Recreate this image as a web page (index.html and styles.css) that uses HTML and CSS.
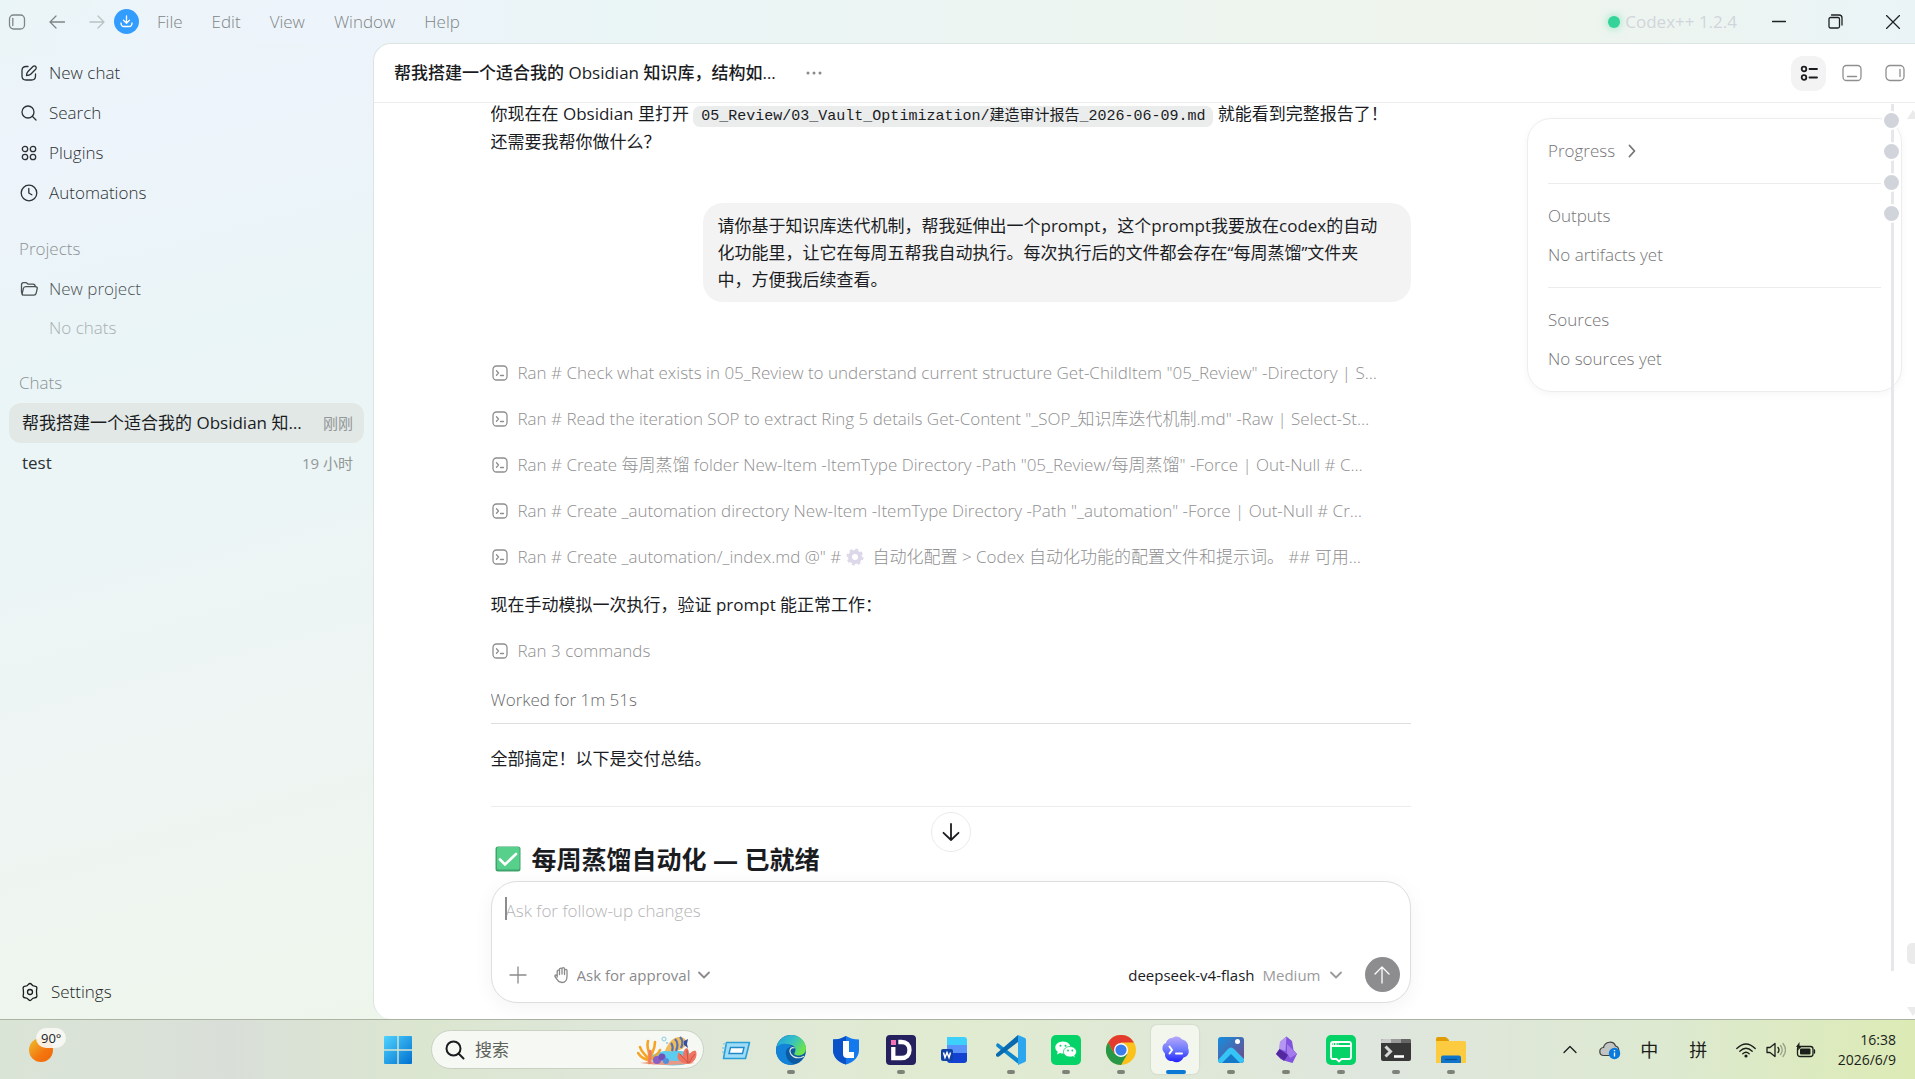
FILE: index.html
```html
<!DOCTYPE html>
<html lang="zh-CN">
<head>
  <meta charset="UTF-8">
  <meta name="viewport" content="width=device-width, initial-scale=1">
  <title>Codex++</title>
  <link rel="stylesheet" href="styles.css">
</head>
<body>

  <!-- shared icons -->
  <svg class="defs" width="0" height="0" aria-hidden="true">
    <symbol id="i-term" viewBox="0 0 18 18"><rect x="2" y="2" width="14" height="14" rx="3.5"/><path d="M5.5 6.8 7.5 9l-2 2.2M9.5 11.5h3"/></symbol>
    <symbol id="i-down" viewBox="0 0 14 14"><path d="M2 4.5 7 9.5l5-5"/></symbol>
  </svg>

  <header class="titlebar">
    <div class="nav-icons">
      <button class="icon-btn" aria-label="Toggle sidebar"><svg class="icon" width="18" height="18" viewBox="0 0 18 18"><rect x="1.5" y="2" width="15" height="14" rx="4"/><path d="M4.8 5.5v7"/></svg></button>
      <button class="icon-btn" aria-label="Back"><svg class="icon" width="18" height="18" viewBox="0 0 18 18"><path d="M8 3 2 9l6 6M2 9h14.500"/></svg></button>
      <button class="icon-btn faded" aria-label="Forward"><svg class="icon" width="18" height="18" viewBox="0 0 18 18"><path d="m10 3 6 6-6 6M16 9H2"/></svg></button>
      <button class="update" aria-label="Update"><svg class="icon" width="15" height="15" viewBox="0 0 15 15"><path d="M7.500 2v7M4.500 6.300l3 3 3-3M2 9c0 3 1 3.500 3 3.500h5c2 0 3-.5 3-3.500"/></svg></button>
    </div>
    <nav class="menu">
      <button>File</button>
      <button>Edit</button>
      <button>View</button>
      <button>Window</button>
      <button>Help</button>
    </nav>
    <div class="version"><span class="dot"></span>Codex++ 1.2.4</div>
    <div class="window-btns">
      <button aria-label="Minimize"><svg class="icon" width="14" height="14" viewBox="0 0 14 14"><path d="M0.500 6.500h13"/></svg></button>
      <button aria-label="Restore"><svg class="icon" width="15" height="15" viewBox="0 0 15 15"><rect x="1" y="3.500" width="10.500" height="10.500" rx="1.500"/><path d="M3.500 1h7.500c2 0 3 1 3 3v7"/></svg></button>
      <button aria-label="Close"><svg class="icon" width="14" height="14" viewBox="0 0 14 14"><path d="m.5.5 13 13m0-13-13 13"/></svg></button>
    </div>
  </header>

  <div class="app">
    <aside class="sidebar">
      <a class="item" href="#"><svg class="icon" width="18" height="18" viewBox="0 0 18 18"><path d="M8 2.500H6C3.500 2.500 2 4 2 6.500v5.500C2 14.500 3.500 16 6 16h5.500c2.500 0 4-1.500 4-4v-2"/><path d="M6.500 11.500c0-2 .5-3 1.500-4l5-5c.8-.8 2-.8 2.700 0s.7 1.900 0 2.700l-5 5c-1 1-2.200 1.300-4.200 1.300z"/></svg>New chat</a>
      <a class="item" href="#"><svg class="icon" width="18" height="18" viewBox="0 0 18 18"><circle cx="8" cy="8" r="6"/><path d="m12.500 12.500 3.500 3.500"/></svg>Search</a>
      <a class="item" href="#"><svg class="icon" width="18" height="18" viewBox="0 0 18 18"><circle cx="5" cy="5" r="2.700"/><circle cx="13" cy="5" r="2.700"/><circle cx="5" cy="13" r="2.700"/><circle cx="13" cy="13" r="2.700"/></svg>Plugins</a>
      <a class="item" href="#"><svg class="icon" width="18" height="18" viewBox="0 0 18 18"><circle cx="9" cy="9" r="7.800"/><path d="M8.800 4.500V9l3 1.800"/></svg>Automations</a>

      <h2>Projects</h2>
      <a class="item project" href="#"><svg class="icon" width="18" height="18" viewBox="0 0 18 18"><path d="M2.500 15 1.500 12V5c0-1.500.7-2.300 2-2.300h2.300c1.500 0 1.500 1.500 3 1.500H13c1.500 0 2.200.8 2.200 2.300"/><path d="M5.800 6.700h9.700c1.300 0 2 .8 1.700 2l-1 4.500c-.3 1.400-1 2-2.400 2H4c-1.300 0-2-.8-1.700-2l1-4.500c.3-1.400 1-2 2.500-2z"/></svg>New project</a>
      <p class="item empty">No chats</p>

      <h2>Chats</h2>
      <a class="chat active" href="#"><span>帮我搭建一个适合我的 Obsidian 知…</span><time>刚刚</time></a>
      <a class="chat" href="#"><span>test</span><time>19 小时</time></a>

      <a class="item settings" href="#"><svg class="icon" width="20" height="20" viewBox="0 0 20 20"><path d="M10 1.500c1.300 0 1.900 1.500 3 2.200s2.800.3 3.600 1.300-.1 2.300-.1 3.500.1 1.800.1 3 .8 2.500 0 3.500-2.400.6-3.600 1.300-1.700 2.200-3 2.200-1.900-1.500-3-2.200-2.800-.3-3.600-1.300.1-2.300.1-3.500-.1-1.800-.1-3-.8-2.500 0-3.500 2.400-.6 3.600-1.300 1.700-2.200 3-2.200z"/><circle cx="10" cy="10" r="2.500"/></svg>Settings</a>
    </aside>

    <main class="panel">
      <header class="panel-head">
        <h1>帮我搭建一个适合我的 Obsidian 知识库，结构如…</h1>
        <button class="more" aria-label="More"><svg width="16" height="4" viewBox="0 0 16 4"><circle cx="2" cy="2" r="1.500"/><circle cx="8" cy="2" r="1.500"/><circle cx="14" cy="2" r="1.500"/></svg></button>
        <div class="views">
          <button class="on" aria-label="Summary"><svg class="icon" width="18" height="18" viewBox="0 0 18 18"><circle cx="4" cy="5" r="2.300"/><circle cx="4" cy="13.500" r="2.300"/><path d="M9.500 5H17M9.500 13.500H17"/></svg></button>
          <button aria-label="Bottom panel"><svg class="icon" width="20" height="18" viewBox="0 0 20 18"><rect x="1" y="1.500" width="18" height="15" rx="3.500"/><path d="M5.500 12.500h9"/></svg></button>
          <button aria-label="Side panel"><svg class="icon" width="20" height="18" viewBox="0 0 20 18"><rect x="1" y="1.500" width="18" height="15" rx="4"/><path d="M15 5.500v7"/></svg></button>
        </div>
      </header>

      <div class="workspace">
        <section class="conversation">
          <div class="thread">
            <p class="text">你现在在 Obsidian 里打开 <code>05_Review/03_Vault_Optimization/建造审计报告_2026-06-09.md</code> 就能看到完整报告了！<br>还需要我帮你做什么？</p>

            <p class="bubble">请你基于知识库迭代机制，帮我延伸出一个prompt，这个prompt我要放在codex的自动化功能里，让它在每周五帮我自动执行。每次执行后的文件都会存在“每周蒸馏”文件夹中，方便我后续查看。</p>

            <div class="runs">
              <p class="run"><svg class="icon" width="18" height="18"><use href="#i-term"/></svg><span>Ran # Check what exists in 05_Review to understand current structure Get-ChildItem "05_Review" -Directory | S…</span></p>
              <p class="run"><svg class="icon" width="18" height="18"><use href="#i-term"/></svg><span>Ran # Read the iteration SOP to extract Ring 5 details Get-Content "_SOP_知识库迭代机制.md" -Raw | Select-St…</span></p>
              <p class="run"><svg class="icon" width="18" height="18"><use href="#i-term"/></svg><span>Ran # Create 每周蒸馏 folder New-Item -ItemType Directory -Path "05_Review/每周蒸馏" -Force | Out-Null # C…</span></p>
              <p class="run"><svg class="icon" width="18" height="18"><use href="#i-term"/></svg><span>Ran # Create _automation directory New-Item -ItemType Directory -Path "_automation" -Force | Out-Null # Cr…</span></p>
              <p class="run"><svg class="icon" width="18" height="18"><use href="#i-term"/></svg><span>Ran # Create _automation/_index.md @" # <svg class="gear" width="18" height="18" viewBox="0 0 18 18"><circle cx="9" cy="9" r="5"/><circle class="teeth" cx="9" cy="9" r="7.500"/></svg>&nbsp; 自动化配置 &gt; Codex 自动化功能的配置文件和提示词。 ## 可用…</span></p>
            </div>

            <p class="text step">现在手动模拟一次执行，验证 prompt 能正常工作：</p>
            <p class="run"><svg class="icon" width="18" height="18"><use href="#i-term"/></svg><span>Ran 3 commands</span></p>
            <p class="worked">Worked for 1m 51s</p>
            <p class="text done">全部搞定！以下是交付总结。</p>
            <h2 class="summary"><svg width="26" height="26" viewBox="0 0 26 26"><rect x="0.500" y="0.500" width="25" height="25" rx="2.500" fill="#3fa36c"/><rect x="2" y="1" width="22.500" height="22.500" rx="1.500" fill="#56d08a"/><path d="m5 13.500 5 5L21 8" fill="none" stroke="#fff" stroke-width="2.600" stroke-linecap="round"/></svg>每周蒸馏自动化 — 已就绪</h2>
          </div>

          <form class="composer">
            <button type="button" class="jump" aria-label="Scroll to bottom"><svg class="icon" width="20" height="20" viewBox="0 0 20 20"><path d="M10 2v16M2.500 10.800 10 18l7.500-7.200"/></svg></button>
            <div class="prompt"><textarea rows="1" aria-label="Message" placeholder="Ask for follow-up changes"></textarea></div>
            <div class="tools">
              <button type="button" class="icon-btn" aria-label="Add"><svg class="icon" width="18" height="18" viewBox="0 0 18 18"><path d="M9 1v16M1 9h16"/></svg></button>
              <label class="approval"><svg class="icon" width="18" height="18" viewBox="0 0 18 18"><path d="M4.200 11V5.200c0-1.500 2.300-1.500 2.300 0V8.500M6.500 8V3.300c0-1.600 2.500-1.600 2.500 0V8M9 8V2.800c0-1.600 2.500-1.600 2.500 0V8.500M11.500 8V4.500c0-1.500 2.500-1.500 2.500 0V10c0 4-1.800 6.500-5 6.500-2.500 0-4-1.200-5-3.200L2 10.500c-.6-1.400 1-2.200 2.200-.6"/></svg>
                <select aria-label="Approval mode"><option>Ask for approval</option></select>
                <svg class="icon chev" width="14" height="14"><use href="#i-down"/></svg></label>
              <button type="button" class="model">deepseek-v4-flash <span>Medium</span><svg class="icon chev" width="14" height="14"><use href="#i-down"/></svg></button>
              <button class="send" aria-label="Send"><svg class="icon" width="20" height="20" viewBox="0 0 20 20"><path d="M10 18V2M3 9l7-7 7 7"/></svg></button>
            </div>
          </form>
        </section>

        <aside class="side">
          <div class="card">
            <section><h3>Progress <svg class="icon" width="14" height="14" viewBox="0 0 14 14"><path d="m4.500 1.500 5 5.500-5 5.500"/></svg></h3></section>
            <section><h3>Outputs</h3><p>No artifacts yet</p></section>
            <section><h3>Sources</h3><p>No sources yet</p></section>
          </div>
        </aside>

        <div class="rail"><i></i><i></i><i></i><i></i></div>
        <div class="scroll"><b class="up"></b><b class="thumb"></b><b class="dn"></b></div>
      </div>
    </main>
  </div>

  <footer class="taskbar">
    <div class="weather"><span class="sun"></span><span class="temp">90°</span></div>

    <div class="apps">
      <button class="task" aria-label="Start"><svg width="30" height="30" viewBox="0 0 30 30"><defs><linearGradient id="win" x1="0" y1="0" x2="1" y2="1"><stop offset="0" stop-color="#4fd3ff"/><stop offset="1" stop-color="#0070cf"/></linearGradient></defs><path fill="url(#win)" d="M1 2q0-1 1-1h12.300v13.300H1zM15.700 1H28q1 0 1 1v12.300H15.700zM1 15.700h13.300V29H2q-1 0-1-1zM15.700 15.700H29V28q0 1-1 1H15.700z"/></svg></button>

      <label class="search">
        <svg class="icon" width="20" height="20" viewBox="0 0 20 20"><circle cx="8.500" cy="8.500" r="7"/><path d="m13.500 13.500 5 5"/></svg>
        <input type="text" placeholder="搜索" aria-label="搜索">
        <svg width="62" height="32" viewBox="0 0 62 32">
          <ellipse cx="36" cy="24" rx="22" ry="7.500" fill="#5ccdf0"/>
          <path d="M3 29q29-5 55 0-28 4-55 0z" fill="#e79a86"/>
          <path d="M12 29c0-8-7-8-9-16M12 24c1-8-3-9-1-17M13 27c1-9 5-10 5-19M13 26c5-3 8-6 10-10M11 26c-5-1-8-4-10-7" fill="none" stroke="#f5a423" stroke-width="2.600" stroke-linecap="round"/>
          <path d="M13 30c-1-6 1-9 0-14" stroke="#ee7a6a" stroke-width="3" fill="none"/>
          <circle cx="20" cy="26" r="4" fill="#8b5fc4"/><circle cx="25" cy="23" r="3.500" fill="#7250b8"/><circle cx="29" cy="27" r="3" fill="#4f8fe0"/>
          <path d="M51 30c-9-1-13-6-9-12 1 2 2 3 4 4 0-4 1-7 4-8 2 2 2 4 2 7 2-3 4-5 7-4 2 6-2 12-8 13z" fill="#ef7560"/>
          <path d="M51 29c-3-4-6-6-8-9M51 29c0-5-1-9-1-13M52 29c2-4 4-7 6-9" stroke="#c94f45" fill="none"/>
          <path d="M28 17C31 8 37 2 44 3c4 1 6 4 5 7-2 6-10 8-21 7z" fill="#f0bb58"/>
          <path d="M34 9c2 2 2 6 1 8M38 5c3 3 3 8 1 12M43 3c3 3 3 7 1 11" stroke="#5872b5" stroke-width="2.300" fill="none"/>
          <path d="m47 7 4-2-1 5 1 4-4-3z" fill="#36509c"/>
          <circle cx="27" cy="5" r="2" fill="none" stroke="#8cc9df"/><circle cx="30" cy="9" r="1" fill="#8cc9df"/>
        </svg>
      </label>

      <button class="task" aria-label="Task view"><svg width="30" height="30" viewBox="0 0 30 30"><path d="M5.500 7.500h23l-4 16h-22z" fill="#9fdcf7" stroke="#2a9fd6" stroke-width="1.600" stroke-linejoin="round"/><path d="m9.500 12.500h13.500l-1.500 6H8z" fill="#fff" stroke="#2089c6" stroke-width="1.400"/><path d="M2 9h4M1 13h3.500M1 17h2" stroke="#62bfe8" stroke-width="1.200"/></svg></button>
      <button class="task run-on" aria-label="Edge"><svg width="30" height="30" viewBox="0 0 30 30"><defs><linearGradient id="edge" x1="0" y1="0" x2="1" y2=".5"><stop offset="0" stop-color="#1b9de2"/><stop offset=".55" stop-color="#35c1c4"/><stop offset="1" stop-color="#6be24e"/></linearGradient></defs><circle cx="15" cy="15" r="15" fill="#0c59a4"/><path d="M.3 13C1.500 5 8 0 15 0c9 0 15 6.500 15 13.500 0 4.500-3.500 7-7.500 7-3 0-5-1-4-2.500 3-4.500-1-8.500-6-8.500C6 9.500 1 11 .3 13z" fill="url(#edge)"/><path d="M.2 13C3 8 12 7 16 12c-4-.5-7 3-6 8 1 6 6 9 9 9C9 32-1 25 .2 13z" fill="#1283d8"/><path d="M18.500 13c-3-1-5 1-4.500 4 .8 4 5 6.500 11 5.500l3-1.300" fill="none" stroke="#dfe8d8" stroke-width="1.200"/></svg></button>
      <button class="task" aria-label="Lenovo"><svg width="30" height="30" viewBox="0 0 30 30"><path d="M15 1c4 2.500 8 3.500 13 3.500V15c0 7-5 12-13 14.500C7 27 2 22 2 15V4.500C7 4.500 11 3.500 15 1z" fill="#1579ee"/><path d="M15 1C11 3.500 7 4.500 2 4.500V15c0 7 5 12 13 14.500z" fill="#0b52c9"/><path d="M12 6h6v11h5v6H16q-4 0-4-4z" fill="#fff"/></svg></button>
      <button class="task run-on" aria-label="Dida"><svg width="30" height="30" viewBox="0 0 30 30"><rect width="30" height="30" rx="4" fill="#25205e"/><path d="M7.300 12v11h8.200c5 0 8-3 8-8s-3-8-8-8h-3.200" fill="none" stroke="#fff" stroke-width="4.300"/><rect x="5" y="5" width="5" height="5" fill="#f273b5"/></svg></button>
      <button class="task" aria-label="Word"><svg width="30" height="30" viewBox="0 0 30 30"><path d="M6 2h17q3 0 3 3v9H6z" fill="#3dd0fb"/><path d="M6 10h20v9H6z" fill="#5a93fa"/><path d="M6 18h20v7q0 3-3 3H9q-3 0-3-3z" fill="#1242cf"/><rect x="0" y="14" width="12" height="12" rx="2" fill="#1041a5"/><path d="m2.500 17.500 1.500 5 2-5 2 5 1.500-5" fill="none" stroke="#fff" stroke-width="1.500"/></svg></button>
      <button class="task run-on" aria-label="VS Code"><svg width="30" height="30" viewBox="0 0 30 30"><path d="M2.500 8.500 23 24v5.500L.5 11.500q-.8-2 .5-3 .8-.6 1.500 0z" fill="#0f86cc"/><path d="M.5 18.500 22 0v7L3 21.500q-1.500.8-2.800-.6-.8-1.300.3-2.400z" fill="#0a6ab0"/><path d="M22 0l7 3q1 .5 1 1.800v20.400q0 1.300-1 1.800l-7 3z" fill="#2ba6ef"/></svg></button>
      <button class="task run-on" aria-label="WeChat"><svg width="30" height="30" viewBox="0 0 30 30"><rect width="30" height="30" rx="5" fill="#06d367"/><path d="M12 6.500c4.500 0 7.500 2.800 7.500 6s-3 6-7.500 6q-1.500 0-3-.5L6 19.500l.7-2.800C5 15.500 4.300 14 4.300 12.500c0-3.200 3.200-6 7.700-6z" fill="#fff"/><path d="M19 11.500c3.800 0 6.500 2.500 6.500 5.300 0 1.500-.7 2.700-1.800 3.600l.6 2.300-2.600-1.200q-1.200.5-2.700.5c-3.800 0-6.500-2.400-6.500-5.200s2.700-5.300 6.500-5.300z" fill="#fff" stroke="#06d367" stroke-width=".8"/><g fill="#06d367"><circle cx="9.500" cy="10.800" r="1"/><circle cx="14.500" cy="10.800" r="1"/><circle cx="17" cy="15.500" r=".9"/><circle cx="21.300" cy="15.500" r=".9"/></g></svg></button>
      <button class="task run-on" aria-label="Chrome"><svg width="30" height="30" viewBox="0 0 30 30"><circle cx="15" cy="15" r="15" fill="#fcc21c"/><path d="M2 7.500A15 15 0 0 1 28 7.500H15L8.500 18.800z" fill="#e33b2e"/><path d="M2 7.500A15 15 0 0 0 15 30l6.500-11.300H8.500z" fill="#279847"/><circle cx="15" cy="15" r="7" fill="#fff"/><circle cx="15" cy="15" r="5.600" fill="#3b7ded"/></svg></button>
      <button class="task run-on current" aria-label="Codex"><svg width="30" height="30" viewBox="0 0 30 30"><defs><linearGradient id="cdx" x1="0" y1="0" x2="0" y2="1"><stop offset="0" stop-color="#b9a8fb"/><stop offset=".5" stop-color="#6e7bfa"/><stop offset="1" stop-color="#2222ff"/></linearGradient></defs><g fill="url(#cdx)"><path d="M11 3c3-2.500 8-2 10 1.500 4 .5 7 4.500 6 8.500 2 4 0 9-4.500 9.500-2 4.500-7 6-11 3.500-4.500.5-8-3-7.500-7.500C0 15 1 9 5 8c.5-3 3-5 6-5z"/></g><path d="m8.500 11.500 2.500 3.500-2.500 3.500M15 18.500h6" fill="none" stroke="#fff" stroke-width="2" stroke-linecap="round"/></svg></button>
      <button class="task run-on" aria-label="Photos"><svg width="30" height="30" viewBox="0 0 30 30"><defs><linearGradient id="pho" x1="0" y1="0" x2="1" y2="1"><stop offset="0" stop-color="#1290e0"/><stop offset="1" stop-color="#7a4585"/></linearGradient></defs><rect x="2" y="2" width="26" height="26" rx="3" fill="url(#pho)"/><path d="m2 25 10-11q3-3 6 0l10 10v1q0 3-3 3H5q-3 0-3-3z" fill="#35c4f5"/><path d="m6 28 9-9 9 9z" fill="#1678c8"/><circle cx="21.500" cy="6.500" r="2.500" fill="#fff"/></svg></button>
      <button class="task run-on" aria-label="Obsidian"><svg width="30" height="30" viewBox="0 0 30 30"><path d="M15.500 1.500 21 6l1.500 9L26 19l-4.500 9-7-2-5-2L5 19l3.500-5L9 7z" fill="#8253dc"/><path d="M15.500 1.500 9 7l-.5 7 6 2z" fill="#b596f2"/><path d="M8.500 14 5 19l8 7 4-6z" fill="#52279f"/><path d="m16 9 6 6 4 4-7 4-3-5z" fill="#a47bec"/></svg></button>
      <button class="task run-on" aria-label="WeCom"><svg width="30" height="30" viewBox="0 0 30 30"><rect width="30" height="30" rx="5" fill="#05d267"/><path d="M7 7h16q2 0 2 2v13q0 2-2 2h-7.500l-2.500 2.500-2.500-2.500H7q-2 0-2-2V9q0-2 2-2zM5 11h20" fill="none" stroke="#fff" stroke-width="1.800"/><path d="M6.500 9h6" stroke="#fff" stroke-width="1.600" stroke-dasharray="1.600 1"/></svg></button>
      <button class="task run-on" aria-label="Terminal"><svg width="30" height="30" viewBox="0 0 30 30"><rect y="4" width="30" height="22" rx="2" fill="#383838"/><path d="M2 4h8v4H0V6q0-2 2-2z" fill="#c9c9c9"/><path d="M10 4h10v4H10z" fill="#9a9a9a"/><path d="M20 4h8q2 0 2 2v2H20z" fill="#666"/><path d="m4.500 11.500 5 5-5 5" fill="none" stroke="#d6d6d6" stroke-width="3"/><path d="M13 21.500h10" stroke="#fff" stroke-width="2.600"/></svg></button>
      <button class="task run-on" aria-label="Explorer"><svg width="30" height="30" viewBox="0 0 30 30"><path d="M0 4q0-2 2-2h7q1 0 2 1l2 2v6H0z" fill="#e19c04"/><path d="M0 6h28.500Q30 6 30 7.500V28H0z" fill="#fdcb3f"/><path d="M5 28v-5.500q0-2 2-2h16q2 0 2 2V28z" fill="#0f76cc"/><path d="M9 24.500h12" stroke="#0b4f91" stroke-width="1.300"/></svg></button>
    </div>

    <div class="tray">
      <button class="hidden-icons" aria-label="Show hidden icons"><svg class="icon" width="16" height="16" viewBox="0 0 16 16"><path d="M2 10.500 8 4.500l6 6"/></svg></button>
      <button class="cloud" aria-label="OneDrive"><svg width="22" height="20" viewBox="0 0 22 20"><path d="M5 15.500C-.5 15.500-.5 8 4.500 7.500 6 1 14.500.5 16.500 6c4 .5 5 9.500 0 9.500z" fill="#c2c4c2" stroke="#3d403d" stroke-width="1.200"/><circle cx="15.500" cy="13.500" r="5.700" fill="#0a7bdc"/><path d="M15.500 12.500v4M15.500 10v1.200" stroke="#fff" stroke-width="1.300"/></svg></button>
      <button class="ime">中</button>
      <button class="ime">拼</button>
      <button aria-label="Network and sound" class="quick">
        <svg class="icon" width="20" height="16" viewBox="0 0 20 16"><path d="M.8 6.500q9.200-9 18.400 0M3.800 9.200q6.200-6 12.400 0M6.800 11.700q3.200-3 6.400 0"/><circle class="fill" cx="10" cy="14" r="1.600"/></svg>
        <svg class="icon" width="20" height="16" viewBox="0 0 20 16"><path d="M1 5.500h3L9 1.500v13l-5-4H1zM12 5.500q2 2.500 0 5"/><path opacity=".35" d="M14.500 3.500q3.500 4.500 0 9M17 1.500q5 6.500 0 13"/></svg>
        <svg class="icon" width="20" height="16" viewBox="0 0 20 16"><rect x="1.500" y="4.500" width="15.500" height="10" rx="2.500"/><rect class="fill" x="4" y="6.500" width="10.500" height="6" rx="1"/><path d="M18.500 8v3"/><path class="fill" d="M3.500 0 0 5h2.500L2 8.500 6 4H3.500z"/></svg>
      </button>
      <div class="clock"><time>16:38</time><time>2026/6/9</time></div>
    </div>
  </footer>

</body>
</html>
```
FILE: styles.css
```css
* {
  box-sizing: border-box;
}
body {
  margin: 0;
  height: 100vh;
  display: flex;
  flex-direction: column;
  overflow: hidden;
  font-family: 'Open Sans', 'Noto Sans CJK SC', sans-serif;
  font-size: 17px;
  line-height: 28px;
  color: #1a1c1f;
  background: linear-gradient(165deg, #eaf5f6 0%, #edf4fb 10%, #eaf5f7 24%, #eef5f3 50%, #eef6ea 75%, #eff7e2 100%);
}
h1, h2, h3, p {
  margin: 0;
  font-weight: 400;
}
button {
  border: 0;
  padding: 0;
  background: none;
  color: inherit;
  font: inherit;
  display: flex;
  align-items: center;
  justify-content: center;
}
a {
  color: inherit;
  text-decoration: none;
}
.defs {
  position: absolute;
}
.icon {
  fill: none;
  stroke: currentColor;
  stroke-width: 1.3;
  stroke-linecap: round;
  stroke-linejoin: round;
  flex: none;
}

/* title bar */
.titlebar {
  flex: 0 0 43px;
  display: flex;
  align-items: center;
  padding-left: 8px;
  color: #7f8586;
  background: linear-gradient(90deg, #eaf5f600 0, #edf4fb 18%, #eaf5f6 32%, #edf5f0 60%, #eff5ec 78%, #eaf4f7 100%);
}
.nav-icons {
  display: flex;
  align-items: center;
  gap: 22px;
}
.icon-btn {
  width: 18px;
  height: 18px;
}
.faded {
  opacity: 0.45;
}
.update {
  width: 25px;
  height: 25px;
  margin-left: -14px;
  border-radius: 50%;
  background: #339cff;
  color: #fff;
}
.menu {
  display: flex;
  gap: 29px;
  margin-left: 18px;
  font-weight: 300;
}
.version {
  display: flex;
  align-items: center;
  gap: 5px;
  margin-left: auto;
  color: #d1d5db;
}
.dot {
  width: 12px;
  height: 12px;
  border-radius: 50%;
  background: #34d399;
  box-shadow: 0 0 8px #34d39999;
}
.window-btns {
  display: flex;
  margin: 0 -6px 0 13px;
  color: #1f2223;
}
.window-btns button {
  width: 57px;
  height: 40px;
}

/* sidebar */
.app {
  flex: 1;
  min-height: 0;
  display: flex;
}
.sidebar {
  flex: 0 0 373px;
  display: flex;
  flex-direction: column;
  padding: 10px 9px 7px;
  color: #2c3133;
}
.item {
  display: flex;
  align-items: center;
  gap: 11px;
  height: 40px;
  padding: 0 11px;
  font-weight: 300;
}
.sidebar h2 {
  padding: 22px 10px 6px;
  font-size: 17px;
  font-weight: 300;
  color: #8d9293;
}
.sidebar .project {
  color: #4c5253;
}
.sidebar .empty {
  height: 38px;
  padding-left: 40px;
  color: #a9aeae;
}
.chat {
  display: flex;
  align-items: center;
  justify-content: space-between;
  height: 40px;
  padding: 0 11px 0 13px;
  border-radius: 12px;
  white-space: nowrap;
}
.chat time {
  font-size: 15px;
  color: #929797;
}
.active {
  background: #e2e8e6;
  color: #1a1c1f;
}
.sidebar .settings {
  margin-top: auto;
  color: #1a1c1f;
}

/* main panel */
.panel {
  flex: 1;
  min-width: 0;
  display: flex;
  flex-direction: column;
  background: #fff;
  border: 1px solid #dce4e3;
  border-width: 1px 0 0 1px;
  border-radius: 18px 0 0 18px;
}
.panel-head {
  flex: 0 0 59px;
  display: flex;
  align-items: center;
  padding: 0 3px 0 20px;
  border-bottom: 1px solid #ededed;
}
.panel-head h1 {
  font-size: 17px;
  font-weight: 500;
}
.more {
  width: 36px;
  height: 36px;
  margin-left: 20px;
}
.more svg {
  fill: #8a8a8b;
}
.views {
  display: flex;
  gap: 8px;
  margin-left: auto;
  color: #8f8f91;
}
.views button {
  width: 35px;
  height: 35px;
  border-radius: 12px;
}
.views .on {
  background: #f3f3f3;
  color: #1a1c1f;
}
.views .on .icon {
  stroke-width: 1.8;
}
.workspace {
  position: relative;
  flex: 1;
  min-height: 0;
  display: flex;
}
.conversation {
  flex: 1;
  min-width: 0;
  display: flex;
  flex-direction: column;
  padding: 0 24px 16px;
}
.thread, .composer {
  width: 100%;
  max-width: 920px;
  margin: 0 auto;
}
.thread {
  flex: 1;
  min-height: 0;
  display: flex;
  flex-direction: column;
  justify-content: flex-end;
  overflow: hidden;
  padding-bottom: 6px;
}
code {
  padding: 2px 8px;
  border-radius: 7px;
  background: #ebecec;
  font-family: 'Liberation Mono', 'Noto Sans CJK SC', monospace;
  font-size: 15px;
  line-height: 20px;
  white-space: nowrap;
}
.bubble {
  align-self: flex-end;
  max-width: 708px;
  margin: 47px 0 57px;
  padding: 9px 24px 9px 15px;
  border-radius: 20px;
  background: #f3f3f3;
  line-height: 27px;
}
.runs {
  display: flex;
  flex-direction: column;
  gap: 18px;
}
.run {
  display: flex;
  align-items: center;
  gap: 9px;
  font-weight: 300;
  color: #8f8f91;
  white-space: nowrap;
}
.run .icon {
  color: #8e8e90;
}
.gear {
  fill: none;
  stroke: #dcd8ea;
  stroke-width: 4;
  vertical-align: -3px;
}
.gear .teeth {
  stroke-width: 2;
  stroke-dasharray: 3 2.9;
}
.step {
  margin: 20px 0 18px;
}
.worked {
  margin-top: 21px;
  padding-bottom: 9px;
  border-bottom: 1px solid #dededf;
  font-weight: 300;
  color: #68696b;
}
.done {
  padding: 21px 0 33px;
  border-bottom: 1px solid #ececec;
}
.summary {
  display: flex;
  align-items: center;
  gap: 11px;
  padding: 36px 0 0 4px;
  font-size: 25px;
  font-weight: 700;
  line-height: 32px;
}

/* composer */
.composer {
  position: relative;
  padding: 15px 10px 10px 13px;
  border: 1px solid #dedede;
  border-radius: 26px;
  background: #fff;
  box-shadow: 0 4px 20px #0000000d;
}
.jump {
  position: absolute;
  left: 50%;
  bottom: calc(100% + 30px);
  width: 40px;
  height: 40px;
  margin-left: -20px;
  border: 1px solid #ebebeb;
  border-radius: 50%;
  background: #fff;
}
.jump .icon {
  stroke-width: 1.8;
}
.prompt {
  position: relative;
  height: 60px;
}
.prompt::before {
  content: '';
  position: absolute;
  left: 0;
  top: 0;
  width: 2px;
  height: 23px;
  background: #8c8c8e;
}
.prompt textarea {
  display: block;
  width: 100%;
  border: 0;
  padding: 0 1px;
  resize: none;
  outline: none;
  background: none;
  font: inherit;
  font-weight: 300;
}
.prompt textarea::placeholder {
  color: #b4b4b6;
}
.tools {
  display: flex;
  align-items: center;
  height: 35px;
  padding-left: 4px;
  font-size: 15px;
  color: #8a8a8c;
}
.approval {
  display: flex;
  align-items: center;
  gap: 6px;
  margin-left: 26px;
}
.approval select {
  appearance: none;
  border: 0;
  padding: 0;
  background: none;
  color: inherit;
  font: inherit;
}
.chev {
  stroke-width: 1.8;
}
.model {
  gap: 8px;
  margin: 0 22px 0 auto;
  color: #1a1c1f;
}
.model span, .model .icon {
  color: #9a9a9c;
}
.send {
  width: 35px;
  height: 35px;
  border-radius: 50%;
  background: #8d8d8f;
  color: #fff;
}

/* progress card */
.side {
  flex: 0 0 388px;
  padding: 15px 13px 0 0;
}
.card {
  padding: 0 20px;
  border: 1px solid #ededed;
  border-radius: 24px;
  box-shadow: 0 2px 8px #0000000a;
  font-weight: 300;
  color: #747476;
}
.card section {
  padding: 18px 0;
}
.card section + section {
  border-top: 1px solid #ececec;
}
.card h3 {
  display: flex;
  align-items: center;
  gap: 10px;
  font-size: 17px;
  font-weight: 300;
}
.card h3 .icon {
  stroke-width: 1.8;
}
.card p {
  padding-top: 11px;
  font-weight: 300;
}

/* message markers float over the card edge */
.rail {
  position: absolute;
  top: 1px;
  bottom: 48px;
  right: 15px;
  width: 16px;
  display: flex;
  flex-direction: column;
  gap: 12px;
  padding-top: 7px;
  background: linear-gradient(#e5e7eb, #e5e7eb) center / 3px 100% no-repeat;
}
.rail i {
  width: 19px;
  height: 19px;
  margin-left: -2px;
  border: 2px solid #fff;
  border-radius: 50%;
  background: #d1d5db;
}
.scroll {
  position: absolute;
  top: 7px;
  bottom: 3px;
  right: 0;
  width: 8px;
  display: flex;
  flex-direction: column;
  overflow: hidden;
}
.scroll b {
  width: 12px;
  background: #ebebec;
}
.up, .dn {
  height: 9px;
}
.up {
  clip-path: polygon(50% 0, 100% 100%, 0 100%);
}
.dn {
  clip-path: polygon(0 0, 100% 0, 50% 100%);
}
.thumb {
  height: 21px;
  margin: auto 0 43px;
  border-radius: 5px;
}

/* taskbar */
.taskbar {
  flex: 0 0 59px;
  display: flex;
  align-items: center;
  border-top: 1px solid #abb3a4;
  background: linear-gradient(90deg, #dae4d6 0%, #d9dfd8 12%, #dbe6d0 22%, #dfe7da 33%, #e0ebd0 50%, #dfe6de 72%, #dde9d0 87%, #dcebb5 100%);
}
.weather {
  flex: 0 0 370px;
  display: flex;
  align-items: flex-start;
  height: 44px;
  padding-left: 29px;
}
.sun {
  width: 24px;
  height: 24px;
  margin-top: 10px;
  border-radius: 50%;
  background: linear-gradient(135deg, #ecc02f, #f5760f 60%, #ee6606);
}
.temp {
  height: 20px;
  margin-left: -17px;
  padding: 0 5px;
  border-radius: 10px;
  background: #f8f8f5e6;
  font-size: 13px;
  line-height: 20px;
}
.apps {
  display: flex;
  align-items: center;
}
.task {
  position: relative;
  width: 55px;
  height: 59px;
}
.task svg {
  position: relative;
}
.run-on::after {
  content: '';
  position: absolute;
  left: 50%;
  bottom: 5px;
  width: 8px;
  height: 4px;
  margin-left: -4px;
  border-radius: 2px;
  background: #7e8279;
}
.current::before {
  content: '';
  position: absolute;
  inset: 5px 4px 5px 3px;
  border-radius: 6px;
  background: #f2f6ec;
  box-shadow: 0 0 2px #00000026;
}
.current::after {
  width: 20px;
  margin-left: -10px;
  background: #0a78d4;
}
.search {
  display: flex;
  align-items: center;
  gap: 10px;
  width: 273px;
  height: 39px;
  margin: 0 4px 0 6px;
  padding: 0 4px 0 13px;
  border: 1px solid #c9d2c2;
  border-radius: 20px;
  background: #f6f8f3;
}
.search .icon {
  stroke-width: 2;
}
.search input {
  flex: 1;
  min-width: 0;
  border: 0;
  padding: 0;
  background: none;
  font: inherit;
}
.search input::placeholder {
  color: #5c615c;
}
.tray {
  display: flex;
  align-items: center;
  margin-left: auto;
  padding-right: 19px;
  color: #1b1e1a;
}
.tray button {
  height: 44px;
}
.hidden-icons {
  width: 50px;
}
.cloud {
  width: 30px;
}
.ime {
  width: 49px;
  font-size: 18px;
}
.quick {
  width: 101px;
  gap: 10px;
  padding-left: 5px;
}
.tray .fill {
  fill: currentColor;
  stroke: none;
}
.clock {
  display: flex;
  flex-direction: column;
  align-items: flex-end;
  margin-left: 14px;
  font-size: 14px;
  line-height: 20px;
}
```
